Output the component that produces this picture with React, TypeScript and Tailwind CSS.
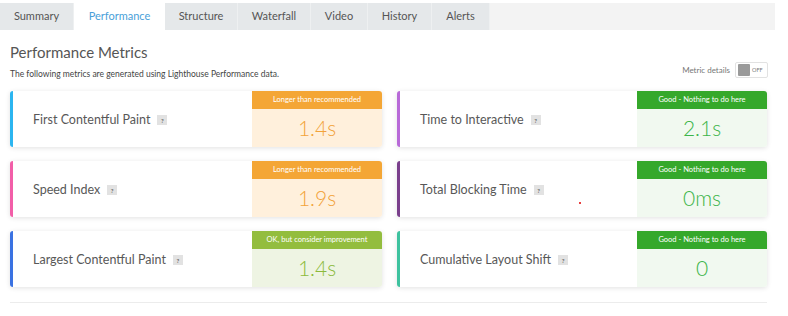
import React from "react";

type Metric = {
  label: string;
  border: string;
  status: "warn" | "good" | "ok";
  value: string;
};

const metrics: Metric[] = [
  { label: "First Contentful Paint", border: "border-[#2bb5f0]", status: "warn", value: "1.4s" },
  { label: "Time to Interactive", border: "border-[#b86ad8]", status: "good", value: "2.1s" },
  { label: "Speed Index", border: "border-[#f25ea8]", status: "warn", value: "1.9s" },
  { label: "Total Blocking Time", border: "border-[#7a3f8c]", status: "good", value: "0ms" },
  { label: "Largest Contentful Paint", border: "border-[#3a72e2]", status: "ok", value: "1.4s" },
  { label: "Cumulative Layout Shift", border: "border-[#3ec29f]", status: "good", value: "0" },
];

const statusStyles = {
  warn: {
    text: "Longer than recommended",
    head: "bg-[#f4a635]",
    body: "bg-[#fff0dc] text-[#f2a33a]",
  },
  good: {
    text: "Good - Nothing to do here",
    head: "bg-[#35a82b]",
    body: "bg-[#f1f9f0] text-[#3db54a]",
  },
  ok: {
    text: "OK, but consider improvement",
    head: "bg-[#93bd3e]",
    body: "bg-[#eef4e3] text-[#8cba3b]",
  },
};

const tabs = [
  { name: "Summary", w: "w-[74px]" },
  { name: "Performance", w: "w-[91px]", active: true },
  { name: "Structure", w: "w-[73px]" },
  { name: "Waterfall", w: "w-[73px]" },
  { name: "Video", w: "w-[57px]" },
  { name: "History", w: "w-[64px]" },
  { name: "Alerts", w: "w-[58px]" },
];

function Card({ m }: { m: Metric }) {
  const s = statusStyles[m.status];
  return (
    <div
      className={`flex h-[56px] rounded-[3px] border-l-[3px] ${m.border} bg-white shadow-[0_1px_5px_rgba(0,0,0,0.12)] overflow-hidden`}
    >
      <div className="flex flex-1 items-center pl-[20px] pt-[2px] text-[12.5px] text-[#585858]">
        <span>{m.label}</span>
        <span className="ml-[7px] flex h-[10px] w-[10px] items-center justify-center bg-[#e2e2e2] text-[6px] font-bold text-[#666]">
          ?
        </span>
      </div>
      <div className="flex w-[130px] flex-col">
        <div className={`flex h-[18px] items-center justify-center text-[7.5px] text-white ${s.head}`}>
          {s.text}
        </div>
        <div className={`flex flex-1 items-center justify-center text-[21px] font-light ${s.body}`}>
          {m.value}
        </div>
      </div>
    </div>
  );
}

export default function App() {
  return (
    <div className="relative h-[316px] w-[788px] overflow-hidden bg-white font-['Lato','Open_Sans',sans-serif]">
      <div className="mt-[3px] flex h-[27px] w-[775px]">
        {tabs.map((t) => (
          <div
            key={t.name}
            className={`flex ${t.w} items-center justify-center text-[11px] ${
              t.active
                ? "bg-white text-[#4a9fd9]"
                : "border-r border-[#eef0f1] bg-[#e5e8ea] text-[#555]"
            }`}
          >
            {t.name}
          </div>
        ))}
        <div className="flex-1 bg-[#f3f3f3]" />
      </div>

      <div className="pl-[10px] pt-[12px] text-[15px] leading-[20px] text-[#555]">
        Performance Metrics
      </div>

      <div className="flex w-[768px] items-end justify-between pl-[10px]">
        <div className="text-[8.5px] leading-[8px] text-[#444]">
          The following metrics are generated using Lighthouse Performance data.
        </div>
        <div className="flex items-center">
          <span className="mr-[5px] text-[8px] text-[#777]">Metric details</span>
          <div className="flex h-[16px] w-[33px] items-center rounded-[2px] border border-[#e2e2e2] bg-white px-[2px]">
            <div className="h-[12px] w-[12px] rounded-[1px] bg-[#9a9a9a]" />
            <span className="ml-[2px] text-[5.5px] text-[#777]">OFF</span>
          </div>
        </div>
      </div>

      <div className="mt-[13px] ml-[10px] grid grid-cols-[372px_370px] gap-x-[15px] gap-y-[14px]">
        {metrics.map((m) => (
          <Card key={m.label} m={m} />
        ))}
      </div>

      <div className="ml-[10px] mt-[15px] w-[757px] border-t border-[#ececec]" />

      <div className="absolute left-[579px] top-[202px] h-[2px] w-[2px] rounded-full bg-[#e00000]" />
    </div>
  );
}
